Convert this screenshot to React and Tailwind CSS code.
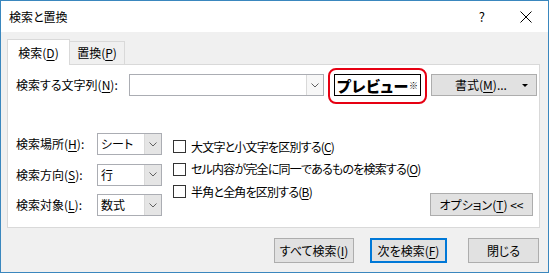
import React from "react";

const U = ({ children }) => (
  <span className="underline underline-offset-[2px] decoration-[1px]">{children}</span>
);

const Chevron = () => (
  <svg width="8" height="5" viewBox="0 0 8 5" className="block">
    <polyline points="0.5,0.5 4,4 7.5,0.5" fill="none" stroke="#606060" strokeWidth="1" />
  </svg>
);

const Combo = ({ value }) => (
  <div className="w-[65px] h-[22px] border border-[#abadb3] bg-white flex">
    <div className="flex-1 flex items-center pl-[3px]">{value}</div>
    <div className="w-[17px] h-full border-l border-[#d9d9d9] bg-[#e5e5e5] flex items-center justify-center">
      <Chevron />
    </div>
  </div>
);

const Check = ({ children }) => (
  <div className="flex items-center h-[13px]">
    <div className="w-[13px] h-[13px] border border-[#333333] bg-white shrink-0" />
    <span className="ml-[5px] whitespace-nowrap tracking-[-0.8px]">{children}</span>
  </div>
);

const Btn = ({ children, className = "", primary = false }) => (
  <div
    className={
      "h-[25px] bg-[#e1e1e1] flex items-center justify-center whitespace-nowrap " +
      (primary ? "border-2 border-[#0078d7] " : "border border-[#adadad] ") +
      className
    }
  >
    {children}
  </div>
);

export default function App() {
  return (
    <div className="w-[549px] h-[273px] border border-[#3a87be] bg-[#f0f0f0] flex flex-col text-[12px] leading-none text-black font-['Noto_Sans_CJK_JP','Noto_Sans',sans-serif] [font-feature-settings:'palt'] overflow-hidden">
      {/* Title bar */}
      <div className="h-[31px] bg-white flex items-center pl-[8px] shrink-0">
        <span className="text-[12px]">検索と置換</span>
        <span className="ml-auto text-[13px] mr-[35px]">?</span>
        <svg width="12" height="12" viewBox="0 0 12 12" className="mr-[16px]">
          <line x1="0.5" y1="0.5" x2="11.5" y2="11.5" stroke="#000" strokeWidth="1" />
          <line x1="11.5" y1="0.5" x2="0.5" y2="11.5" stroke="#000" strokeWidth="1" />
        </svg>
      </div>

      {/* Tabs */}
      <div className="pt-[7px] pl-[6px] flex items-end shrink-0">
        <div className="relative z-10 -mb-px w-[63px] h-[26px] bg-white border-t border-l border-r border-[#d9d9d9] flex items-center justify-center">
          <span>
            検索(<U>D</U>)
          </span>
        </div>
        <div className="w-[55px] h-[23px] bg-[#f0f0f0] border-t border-r border-[#d9d9d9] flex items-center justify-center">
          <span>
            置換(<U>P</U>)
          </span>
        </div>
      </div>

      {/* Panel */}
      <div className="ml-[6px] w-[533px] h-[164px] bg-white border border-[#d9d9d9] shrink-0 pt-[9px] pl-[8px] flex flex-col">
        {/* Row 1 */}
        <div className="flex items-center h-[22px]">
          <div className="w-[113px] whitespace-nowrap">
            検索する文字列(<U>N</U>):
          </div>
          <div className="w-[195px] h-[22px] border border-[#abadb3] bg-white flex justify-end">
            <div className="w-[17px] h-full border-l border-[#d9d9d9] bg-[#f7f7f7] flex items-center justify-center">
              <Chevron />
            </div>
          </div>
          <div className="relative ml-[10px]">
            <div className="w-[87px] h-[22px] border border-black bg-white flex items-center pl-[2px] whitespace-nowrap">
              <span className="text-[15px] font-black tracking-[0.6px]">プレビュー</span>
              <span className="text-[9px] font-bold text-black">※</span>
            </div>
            <div className="absolute left-[-6px] top-[-6px] w-[99px] h-[36px] border-2 border-[#e60012] rounded-[8px]" />
          </div>
          <Btn className="ml-[10px] w-[106px] !h-[22px] relative">
            <span className="mr-[6px]">
              書式(<U>M</U>)...
            </span>
            <svg width="6" height="3" viewBox="0 0 6 3" className="absolute right-[8px] top-[9px]">
              <polygon points="0,0 6,0 3,3" fill="#000" />
            </svg>
          </Btn>
        </div>

        {/* Row 2 */}
        <div className="flex mt-[37px]">
          <div className="flex flex-col gap-[8.5px]">
            {[
              ["検索場所", "H", "シート"],
              ["検索方向", "S", "行"],
              ["検索対象", "L", "数式"],
            ].map(([l, k, v]) => (
              <div key={k} className="flex items-center h-[22px]">
                <div className="w-[81px] whitespace-nowrap">
                  {l}(<U>{k}</U>):
                </div>
                <Combo value={v} />
              </div>
            ))}
          </div>
          <div className="ml-[11px] pt-[7px] flex flex-col gap-[9.5px]">
            <Check>
              大文字と小文字を区別する(<U>C</U>)
            </Check>
            <Check>
              セル内容が完全に同一であるものを検索する(<U>O</U>)
            </Check>
            <Check>
              半角と全角を区別する(<U>B</U>)
            </Check>
          </div>
          <Btn className="ml-auto mr-[6px] self-end w-[103px] !h-[23px]">
            オプション(<U>T</U>) &lt;&lt;
          </Btn>
        </div>
      </div>

      {/* Bottom buttons */}
      <div className="flex justify-end pr-[9px] pt-[10px]">
        <Btn className="w-[80px]">
          すべて検索(<U>I</U>)
        </Btn>
        <Btn primary className="ml-[16px] w-[77px]">
          次を検索(<U>F</U>)
        </Btn>
        <Btn className="ml-[21px] w-[71px]">閉じる</Btn>
      </div>
    </div>
  );
}
